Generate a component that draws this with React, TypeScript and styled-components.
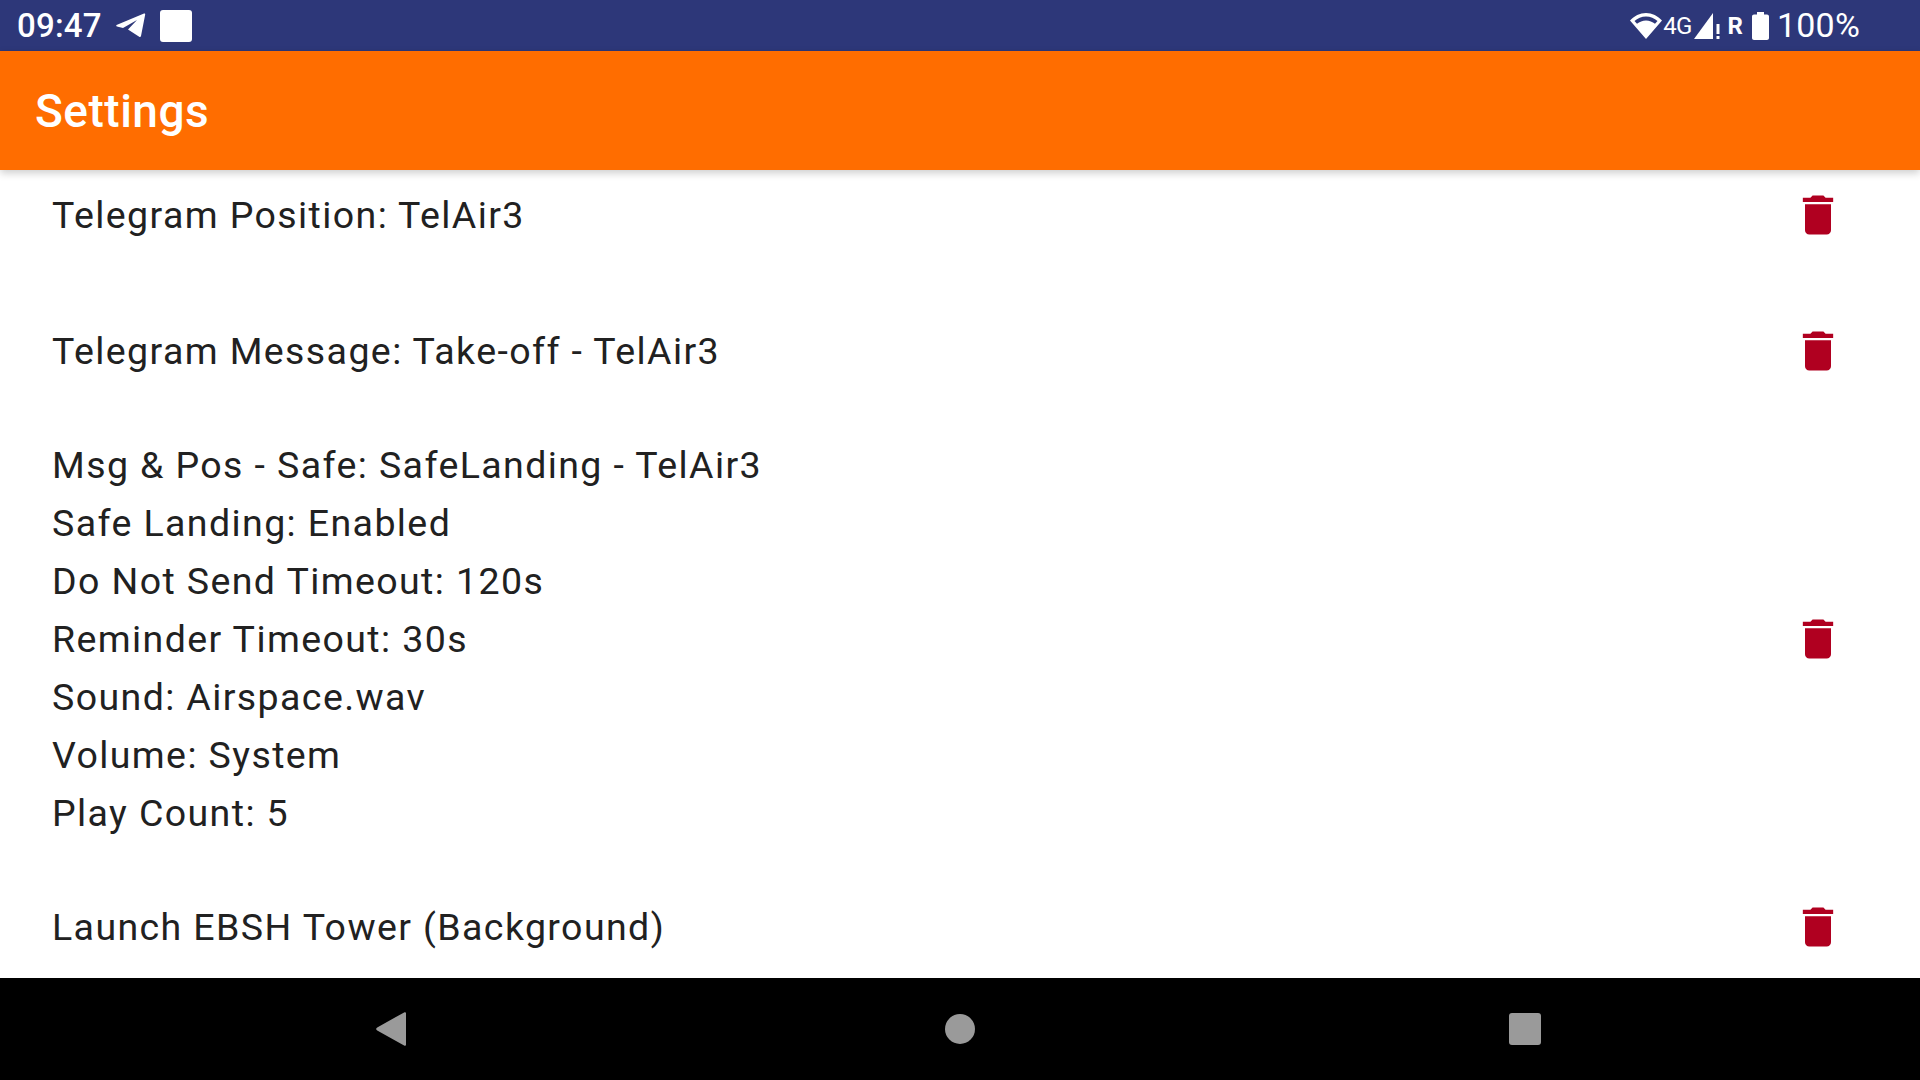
import styled, { createGlobalStyle } from 'styled-components';

const GlobalStyle = createGlobalStyle`
  html, body {
    margin: 0;
    padding: 0;
    height: 100%;
    background: #fff;
    overflow: hidden;
    font-family: Roboto, "Noto Sans", sans-serif;
  }
`;

const Screen = styled.div`
  width: 1920px;
  height: 1080px;
  display: flex;
  flex-direction: column;
  overflow: hidden;
`;

const StatusBar = styled.div`
  height: 51px;
  flex: none;
  background: #2d3779;
  color: #fff;
  display: flex;
  align-items: center;
  justify-content: space-between;
  padding: 0 60px 0 17px;
`;

const StatusGroup = styled.div`
  display: flex;
  align-items: center;
`;

const StatusText = styled.span`
  font-size: 33px;
  font-weight: 500;
  letter-spacing: 0.2px;
  line-height: 51px;
`;

const Percent = styled(StatusText)`
  font-size: 34px;
  font-weight: 400;
  letter-spacing: 0.2px;
  margin-left: 8px;
`;

const NotificationBox = styled.div`
  width: 32px;
  height: 32px;
  background: #fff;
  border-radius: 3px;
  margin-left: 14px;
`;

const NetworkLabel = styled.span`
  font-size: 24px;
  font-weight: 400;
  letter-spacing: -0.8px;
  margin: 0 2px 0 1px;
`;

const RoamingLabel = styled.span`
  font-size: 24px;
  font-weight: 700;
  margin: 0 9px 0 8px;
`;

const AppBar = styled.header`
  height: 119px;
  flex: none;
  background: #ff6d00;
  color: #fff;
  display: flex;
  align-items: center;
  padding-left: 35px;
  box-shadow: 0 3px 8px rgba(0, 0, 0, 0.2);
  position: relative;
  z-index: 1;
`;

const Title = styled.h1`
  margin: 0;
  font-size: 46px;
  font-weight: 500;
  letter-spacing: 0.5px;
`;

const List = styled.main`
  flex: 1;
  min-height: 0;
  overflow: hidden;
  background: #fff;
`;

const Row = styled.div<{ $first?: boolean }>`
  display: flex;
  align-items: center;
  justify-content: space-between;
  padding: ${p => (p.$first ? '16px 75px 50px 52px' : '28px 75px 28px 52px')};
`;

const RowText = styled.div`
  font-size: 37.5px;
  line-height: 58px;
  letter-spacing: 1.4px;
  color: #212121;
`;

const TrashIcon = styled.svg`
  width: 52px;
  height: 52px;
  margin-right: 1px;
  fill: #b00020;
  flex: none;
`;

const NavBar = styled.nav`
  height: 102px;
  flex: none;
  background: #000;
  display: flex;
  align-items: center;
  justify-content: space-between;
  padding: 0 379px 0 376px;
`;

const NavCircle = styled.div`
  width: 30px;
  height: 30px;
  margin-left: 4px;
  border-radius: 50%;
  background: #9a9a9a;
`;

const NavSquare = styled.div`
  width: 32px;
  height: 32px;
  border-radius: 3px;
  background: #9a9a9a;
`;

const rows = [
  { lines: ['Telegram Position: TelAir3'], first: true },
  { lines: ['Telegram Message: Take-off - TelAir3'] },
  {
    lines: [
      'Msg & Pos - Safe: SafeLanding - TelAir3',
      'Safe Landing: Enabled',
      'Do Not Send Timeout: 120s',
      'Reminder Timeout: 30s',
      'Sound: Airspace.wav',
      'Volume: System',
      'Play Count: 5',
    ],
  },
  { lines: ['Launch EBSH Tower (Background)'] },
];

function Trash() {
  return (
    <TrashIcon viewBox="0 0 24 24">
      <path d="M6 19c0 1.1.9 2 2 2h8c1.1 0 2-.9 2-2V7H6v12zM19 4h-3.5l-1-1h-5l-1 1H5v2h14V4z" />
    </TrashIcon>
  );
}

export default function App() {
  return (
    <Screen>
      <GlobalStyle />
      <StatusBar>
        <StatusGroup>
          <StatusText>09:47</StatusText>
          <svg width="30" height="25" viewBox="0 0 30 25" style={{ marginLeft: 14 }}>
            <path d="M.5 12 28 .5c.8-.3 1.300.2 1.200 1L25 23c-.2 1-1 1.300-1.800.8L12 16.500 21 7 7 15l-6-1.500c-.8-.2-1-1-.5-1.500z" fill="#fff" />
          </svg>
          <NotificationBox />
        </StatusGroup>
        <StatusGroup>
          <svg width="32" height="26" viewBox="0 0 32 26">
            <path fillRule="evenodd" d="M16 26 0 7.500C4 3 10 0 16 0s12 3 16 7.500zM4.500 8l2.500 2.800C9.500 8.800 12.600 7.500 16 7.500s6.500 1.300 9 3.300L27.500 8C24.500 5.300 20.400 3.500 16 3.500S7.500 5.300 4.500 8z" fill="#fff" />
          </svg>
          <NetworkLabel>4G</NetworkLabel>
          <svg width="26" height="28" viewBox="0 0 26 28">
            <path d="M0 27 19 1v26z" fill="#fff" />
            <path d="M22.500 12h3v10h-3zM22.500 24h3v3h-3z" fill="#fff" />
          </svg>
          <RoamingLabel>R</RoamingLabel>
          <svg width="17" height="28" viewBox="0 0 17 28">
            <path d="M5 0h7v2.500h3c1.100 0 2 .9 2 2V26c0 1.100-.9 2-2 2H2c-1.100 0-2-.9-2-2V4.500c0-1.100.9-2 2-2h3z" fill="#fff" />
          </svg>
          <Percent>100%</Percent>
        </StatusGroup>
      </StatusBar>
      <AppBar>
        <Title>Settings</Title>
      </AppBar>
      <List>
        {rows.map(row => (
          <Row key={row.lines[0]} $first={row.first}>
            <RowText>
              {row.lines.map(line => (
                <div key={line}>{line}</div>
              ))}
            </RowText>
            <Trash />
          </Row>
        ))}
      </List>
      <NavBar>
        <svg width="30" height="34" viewBox="0 0 30 34">
          <path d="M30 1.500v31c0 1.200-.9 1.700-1.900 1.100L1.200 18.600c-1.400-.8-1.400-2.400 0-3.200L28.100.4C29.100-.2 30 .3 30 1.500z" fill="#9a9a9a" />
        </svg>
        <NavCircle />
        <NavSquare />
      </NavBar>
    </Screen>
  );
}
